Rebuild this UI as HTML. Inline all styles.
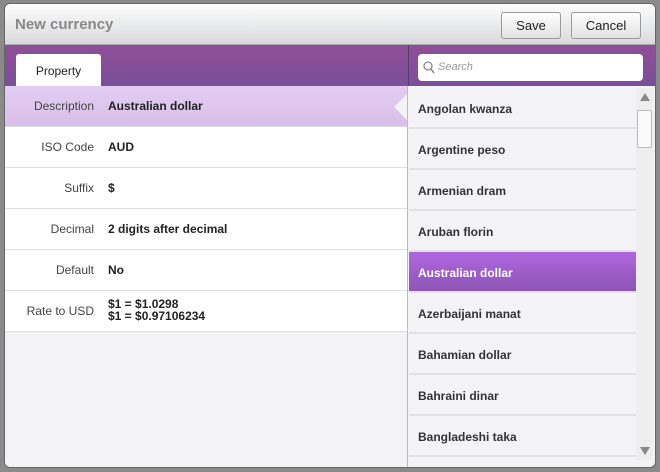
<!DOCTYPE html>
<html><head><style>
*{margin:0;padding:0;box-sizing:border-box}
body{width:660px;height:472px;background:#8a8a8a;font-family:"Liberation Sans",sans-serif;position:relative;overflow:hidden}
.win{position:absolute;left:4px;top:3px;width:652px;height:465px;background:#f3f3f5;border-radius:6px;overflow:hidden;border:1px solid #666}
.title{position:absolute;left:0;top:0;width:100%;height:41px;background:linear-gradient(#fdfdfd,#d9dadc);border-bottom:1px solid #a9a9ad}
.title span{position:absolute;left:10px;top:12px;font-size:15px;font-weight:bold;color:#888}
.btn{position:absolute;top:8px;height:27px;border:1px solid #9a9a9a;border-radius:3px;background:linear-gradient(#fff,#e2e2e2);font-size:13px;color:#222;text-align:center;line-height:25px}
.band{position:absolute;left:0;top:41px;width:100%;height:41px;background:linear-gradient(#8f4f96,#7a4f9a)}
.tab{position:absolute;left:11px;top:9px;width:85px;height:33px;background:#fff;border-radius:3px 3px 0 0;font-size:12px;text-align:center;line-height:34px;color:#222}
.search{position:absolute;left:413px;top:9px;width:225px;height:27px;background:#fff;border-radius:4px;font-size:11px;font-style:italic;color:#999;line-height:27px;padding-left:20px}
.left{position:absolute;left:0;top:82px;width:403px;height:383px;background:#f3f3f5;border-right:1px solid #bbb}
.row{position:absolute;left:0;width:402px;height:41px;background:#fff;border-bottom:1px solid #ddd;font-size:12px;color:#222}
.row .l{position:absolute;right:313px;top:13px;color:#444}
.row .v{position:absolute;left:103px;top:13px;font-weight:bold}
.list{position:absolute;left:404px;top:84px;width:227px;height:381px;background:#f4f4f6}
.it{position:absolute;left:0;width:227px;height:41px;border-bottom:2px solid #e2e2e4;font-size:12px;font-weight:bold;color:#333;padding:14px 0 0 9px}
.sel{background:linear-gradient(#b066e0,#8d55b4);color:#fff}
.sb{position:absolute;left:631px;top:84px;width:17px;height:372px;background:#eee}
</style></head><body>
<div class="win">
<div class="title"><span>New currency</span>
<div class="btn" style="left:496px;width:60px">Save</div>
<div class="btn" style="left:566px;width:70px">Cancel</div></div>
<div class="band"><div class="tab">Property</div>
<div style="position:absolute;left:403px;top:0;width:1px;height:41px;background:#5a3a70"></div>
<div class="search"><svg style="position:absolute;left:5px;top:7px" width="12" height="13"><circle cx="5" cy="5" r="4" fill="none" stroke="#888" stroke-width="1.3"/><line x1="8" y1="8" x2="11" y2="12" stroke="#888" stroke-width="1.5"/></svg>Search</div></div>
<div class="left">
<div class="row" style="top:0;background:linear-gradient(#e3cdf3,#d9bfe9)"><span class="l">Description</span><span class="v">Australian dollar</span></div>
<div class="row" style="top:41px"><span class="l">ISO Code</span><span class="v">AUD</span></div>
<div class="row" style="top:82px"><span class="l">Suffix</span><span class="v">$</span></div>
<div class="row" style="top:123px"><span class="l">Decimal</span><span class="v">2 digits after decimal</span></div>
<div class="row" style="top:164px"><span class="l">Default</span><span class="v">No</span></div>
<div class="row" style="top:205px"><span class="l">Rate to USD</span><span class="v" style="top:7px;line-height:12px">$1 = $1.0298<br>$1 = $0.97106234</span></div>
<div style="position:absolute;left:389px;top:8px;width:0;height:0;border-top:13px solid transparent;border-bottom:13px solid transparent;border-right:13px solid #f4f4f6"></div>
</div>
<div class="list">
<div class="it" style="top:0">Angolan kwanza</div>
<div class="it" style="top:41px">Argentine peso</div>
<div class="it" style="top:82px">Armenian dram</div>
<div class="it" style="top:123px">Aruban florin</div>
<div class="it sel" style="top:164px">Australian dollar</div>
<div class="it" style="top:205px">Azerbaijani manat</div>
<div class="it" style="top:246px">Bahamian dollar</div>
<div class="it" style="top:287px">Bahraini dinar</div>
<div class="it" style="top:328px">Bangladeshi taka</div>
</div>
<div class="sb"><div style="position:absolute;left:4px;top:5px;border-left:5px solid transparent;border-right:5px solid transparent;border-bottom:8px solid #888"></div>
<div style="position:absolute;left:1px;top:22px;width:15px;height:38px;background:#fafafa;border:1px solid #bbb;border-radius:2px"></div>
<div style="position:absolute;left:4px;top:359px;border-left:5px solid transparent;border-right:5px solid transparent;border-top:8px solid #888"></div></div>
</div>
</body></html>
